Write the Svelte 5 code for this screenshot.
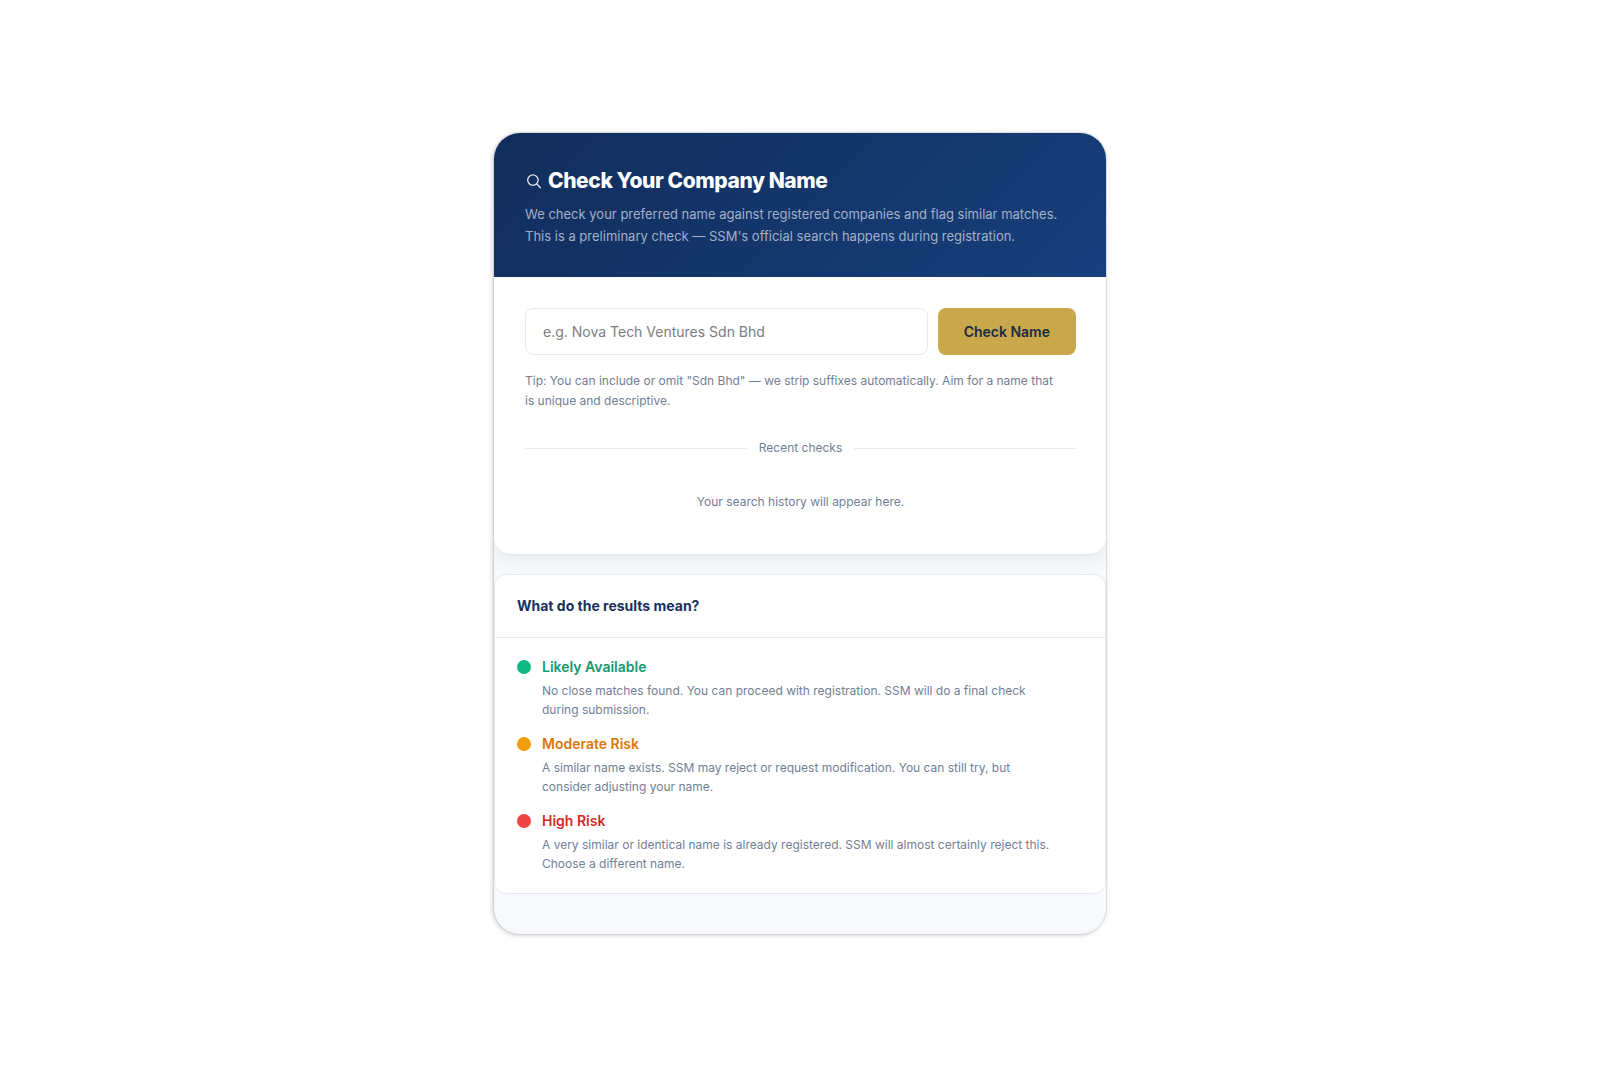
<script>
  let name = $state('');

  const results = [
    {
      level: 'available',
      title: 'Likely Available',
      text: [
        'No close matches found. You can proceed with registration. SSM will do a final check',
        'during submission.'
      ]
    },
    {
      level: 'moderate',
      title: 'Moderate Risk',
      text: [
        'A similar name exists. SSM may reject or request modification. You can still try, but',
        'consider adjusting your name.'
      ]
    },
    {
      level: 'high',
      title: 'High Risk',
      text: [
        'A very similar or identical name is already registered. SSM will almost certainly reject this.',
        'Choose a different name.'
      ]
    }
  ];
</script>

<main class="page">
  <div class="widget">
    <section class="checker">
      <header class="hero">
        <h1>
          <svg class="search" viewBox="0 0 20 20" aria-hidden="true">
            <circle cx="8.8" cy="9" r="5.8" />
            <path d="M13.1 13.3 17.2 17.4" />
          </svg>
          <span>Check Your Company Name</span>
        </h1>
        <p>
          We check your preferred name against registered companies and flag similar matches.<br />
          This is a preliminary check — SSM's official search happens during registration.
        </p>
      </header>
      <div class="body">
        <form onsubmit={(e) => e.preventDefault()}>
          <input
            type="text"
            aria-label="Company name"
            placeholder="e.g. Nova Tech Ventures Sdn Bhd"
            bind:value={name}
          />
          <button type="submit">Check Name</button>
        </form>
        <p class="tip">
          Tip: You can include or omit "Sdn Bhd" — we strip suffixes automatically. Aim for a name
          that<br />is unique and descriptive.
        </p>
        <div class="divider"><span>Recent checks</span></div>
        <p class="empty">Your search history will appear here.</p>
      </div>
    </section>

    <section class="legend">
      <h2>What do the results mean?</h2>
      <ul>
        {#each results as r}
          <li class={r.level}>
            <span class="dot"></span>
            <div>
              <h3>{r.title}</h3>
              <p>{r.text[0]}<br />{r.text[1]}</p>
            </div>
          </li>
        {/each}
      </ul>
    </section>
  </div>
</main>

<style>
  :global(body) {
    margin: 0;
    background: #fff;
  }

  .page {
    min-height: 100vh;
    display: flex;
    align-items: center;
    justify-content: center;
    font-family: Inter, 'Liberation Sans', sans-serif;
    color: #718096;
  }

  .page * {
    box-sizing: border-box;
  }

  h1,
  h2,
  h3,
  p,
  ul {
    margin: 0;
    padding: 0;
  }

  .widget {
    width: 100%;
    max-width: 612px;
    padding-bottom: 40px;
    border-radius: 26px;
    overflow: hidden;
    background: #f7f9fc;
    box-shadow:
      0 0 1px 1px rgba(0, 0, 0, 0.08),
      -1px 1px 4px 1px rgba(0, 0, 0, 0.15);
  }

  .checker {
    border-radius: 0 0 16px 16px;
    overflow: hidden;
    background: #fff;
    box-shadow:
      0 1px 1px #e2e8f0,
      0 4px 20px rgba(15, 44, 89, 0.08);
  }

  .hero {
    padding: 34px 31px 30px;
    background: linear-gradient(135deg, #112d5b, #173f7c);
  }

  h1 {
    display: flex;
    align-items: center;
    gap: 5px;
    margin-bottom: 8px;
    font-size: 21px;
    line-height: 28px;
    font-weight: 800;
    letter-spacing: -0.02em;
    color: #fff;
  }

  .search {
    width: 18px;
    height: 18px;
    fill: none;
    stroke: #dfe5ee;
    stroke-width: 1.5;
    stroke-linecap: round;
  }

  .hero p {
    font-size: 13px;
    line-height: 22px;
    color: #a3b1c7;
  }

  .body {
    padding: 31px 30px 42px 31px;
  }

  form {
    display: flex;
    gap: 10px;
  }

  input {
    flex: 1;
    min-width: 0;
    height: 47px;
    padding: 0 17px;
    border: 1px solid #e5eaf3;
    border-radius: 8px;
    background: #fff;
    font: 14px Inter, 'Liberation Sans', sans-serif;
    color: #112d5b;
  }

  input::placeholder {
    color: #7d7d7d;
    opacity: 1;
  }

  button {
    height: 47px;
    padding: 0 26px;
    border: 0;
    border-radius: 8px;
    background: #c8a84b;
    font: 600 14px Inter, 'Liberation Sans', sans-serif;
    color: #1a2b42;
    cursor: pointer;
  }

  .tip {
    margin-top: 16px;
    font-size: 12px;
    line-height: 20px;
  }

  .divider {
    display: flex;
    align-items: center;
    gap: 12px;
    margin-top: 27px;
    font-size: 12px;
    line-height: 20px;
  }

  .divider::before,
  .divider::after {
    content: '';
    flex: 1;
    height: 1px;
    background: #e5eaf3;
  }

  .empty {
    margin-top: 34px;
    text-align: center;
    font-size: 12px;
    line-height: 20px;
  }

  .legend {
    margin-top: 20px;
    border: 1px solid #e5eaf2;
    border-radius: 12px;
    background: #fff;
  }

  h2 {
    padding: 20px 22px;
    border-bottom: 1px solid #e5eaf2;
    font-size: 14px;
    line-height: 22px;
    font-weight: 700;
    color: #19305f;
  }

  ul {
    display: grid;
    gap: 14px;
    padding: 18px 22px 20px;
    list-style: none;
  }

  li {
    display: flex;
    gap: 11px;
  }

  .dot {
    flex: none;
    width: 14px;
    height: 14px;
    margin-top: 4px;
    border-radius: 50%;
  }

  h3 {
    margin-bottom: 3px;
    font-size: 14px;
    line-height: 22px;
    font-weight: 600;
  }

  li p {
    font-size: 12px;
    line-height: 19px;
  }

  .available .dot {
    background: #10b981;
  }
  .available h3 {
    color: #16996a;
  }
  .moderate .dot {
    background: #f59e0b;
  }
  .moderate h3 {
    color: #d97706;
  }
  .high .dot {
    background: #ef4444;
  }
  .high h3 {
    color: #dc2626;
  }
</style>
